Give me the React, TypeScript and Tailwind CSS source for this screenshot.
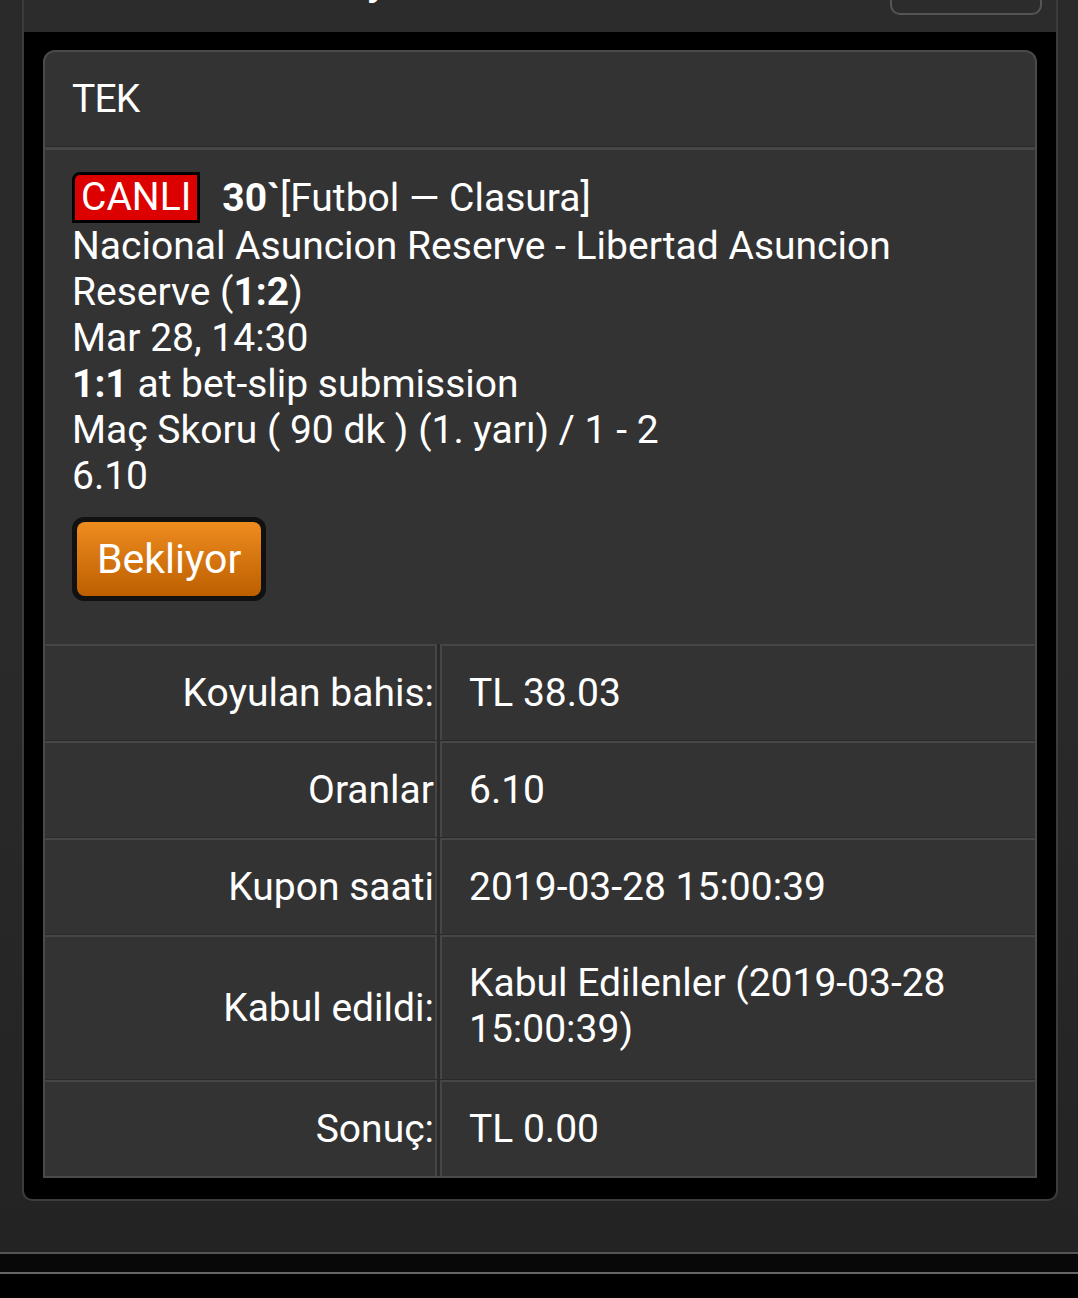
const rows = [
  { label: "Koyulan bahis:", value: ["TL 38.03"] },
  { label: "Oranlar", value: ["6.10"] },
  { label: "Kupon saati", value: ["2019-03-28 15:00:39"] },
  { label: "Kabul edildi:", value: ["Kabul Edilenler (2019-03-28", "15:00:39)"] },
  { label: "Sonuç:", value: ["TL 0.00"] },
];

export default function App() {
  return (
    <div
      className="min-h-screen bg-black text-white"
      style={{ fontFamily: "Roboto, 'Noto Sans', sans-serif" }}
    >
      <div className="bg-gradient-to-b from-[#2a2a2a] via-[#2a2a2a] to-[#232323] pl-[22px] pr-[20px] pb-[51px]">
        <div className="border-x-2 border-b-2 border-[#3c3c3c] rounded-b-[10px] bg-[#2c2c2c] overflow-hidden">
          {/* top header, scrolled mostly out of view */}
          <div className="h-[32px] overflow-hidden flex justify-between pl-[150px] pr-[14px]">
            <div className="text-[40px] leading-none -mt-[38px] font-bold">Bahis Detayı</div>
            <div className="w-[152px] h-[46px] -mt-[31px] border-2 border-[#555] rounded-[10px]" />
          </div>

          {/* black body */}
          <div className="bg-black px-[19px] pt-[18px] pb-[21px] rounded-b-[8px]">
            <div className="border-2 border-[#4a4a4a] rounded-t-[12px] bg-[#333333]">
              {/* header */}
              <div className="h-[95px] flex items-center px-[27px] border-b border-[#2a2a2a]">
                <span className="text-[39px] tracking-[-0.8px] leading-none">TEK</span>
              </div>

              {/* event */}
              <div className="border-t-[3px] border-[#464646] px-[27px] pt-[22px] pb-[43px] text-[39px] leading-[46px]">
                <div className="flex items-center">
                  <span className="inline-flex items-center h-[51px] px-[6px] bg-[#dd0000] border-[3px] border-black rounded-tl-[8px] leading-none">
                    CANLI
                  </span>
                  <span className="ml-[22px] font-bold">30`</span>
                  <span>[Futbol — Clasura]</span>
                </div>
                <div>Nacional Asuncion Reserve - Libertad Asuncion</div>
                <div>
                  Reserve (<span className="font-bold">1:2</span>)
                </div>
                <div>Mar 28, 14:30</div>
                <div>
                  <span className="font-bold">1:1</span> at bet-slip submission
                </div>
                <div>Maç Skoru ( 90 dk ) (1. yarı) / 1 - 2</div>
                <div>6.10</div>
                <div className="mt-[18px]">
                  <span className="inline-block p-[5px] bg-[#111] rounded-[12px]">
                    <span className="flex items-center h-[74px] px-[20px] rounded-[8px] bg-gradient-to-b from-[#ee8c1e] to-[#bd5f00] text-[41px] leading-none">
                      Bekliyor
                    </span>
                  </span>
                </div>
              </div>

              {/* table */}
              <div className="bg-[#2a2a2a] flex flex-col gap-[1px]">
                {rows.map((r) => (
                  <div key={r.label} className="flex gap-[3px] text-[39px] leading-[46px]">
                    <div className="w-[392px] flex items-center justify-end bg-[#333333] border-t-2 border-r-2 border-[#464646] pr-[1px]">
                      {r.label}
                    </div>
                    <div
                      className={
                        r.value.length > 1
                          ? "flex-1 bg-[#333333] border-t-2 border-l-2 border-[#464646] pl-[27px] pt-[23px] pb-[27px]"
                          : "flex-1 bg-[#333333] border-t-2 border-l-2 border-[#464646] pl-[27px] h-[96px] flex flex-col justify-center"
                      }
                    >
                      {r.value.map((v) => (
                        <div key={v}>{v}</div>
                      ))}
                    </div>
                  </div>
                ))}
              </div>
            </div>
          </div>
        </div>
      </div>

      {/* bottom bars */}
      <div className="h-[2px] bg-[#555]" />
      <div className="h-[18px] bg-[#080808]" />
      <div className="h-[2px] bg-[#666]" />
      <div className="h-[24px] bg-black" />
    </div>
  );
}
